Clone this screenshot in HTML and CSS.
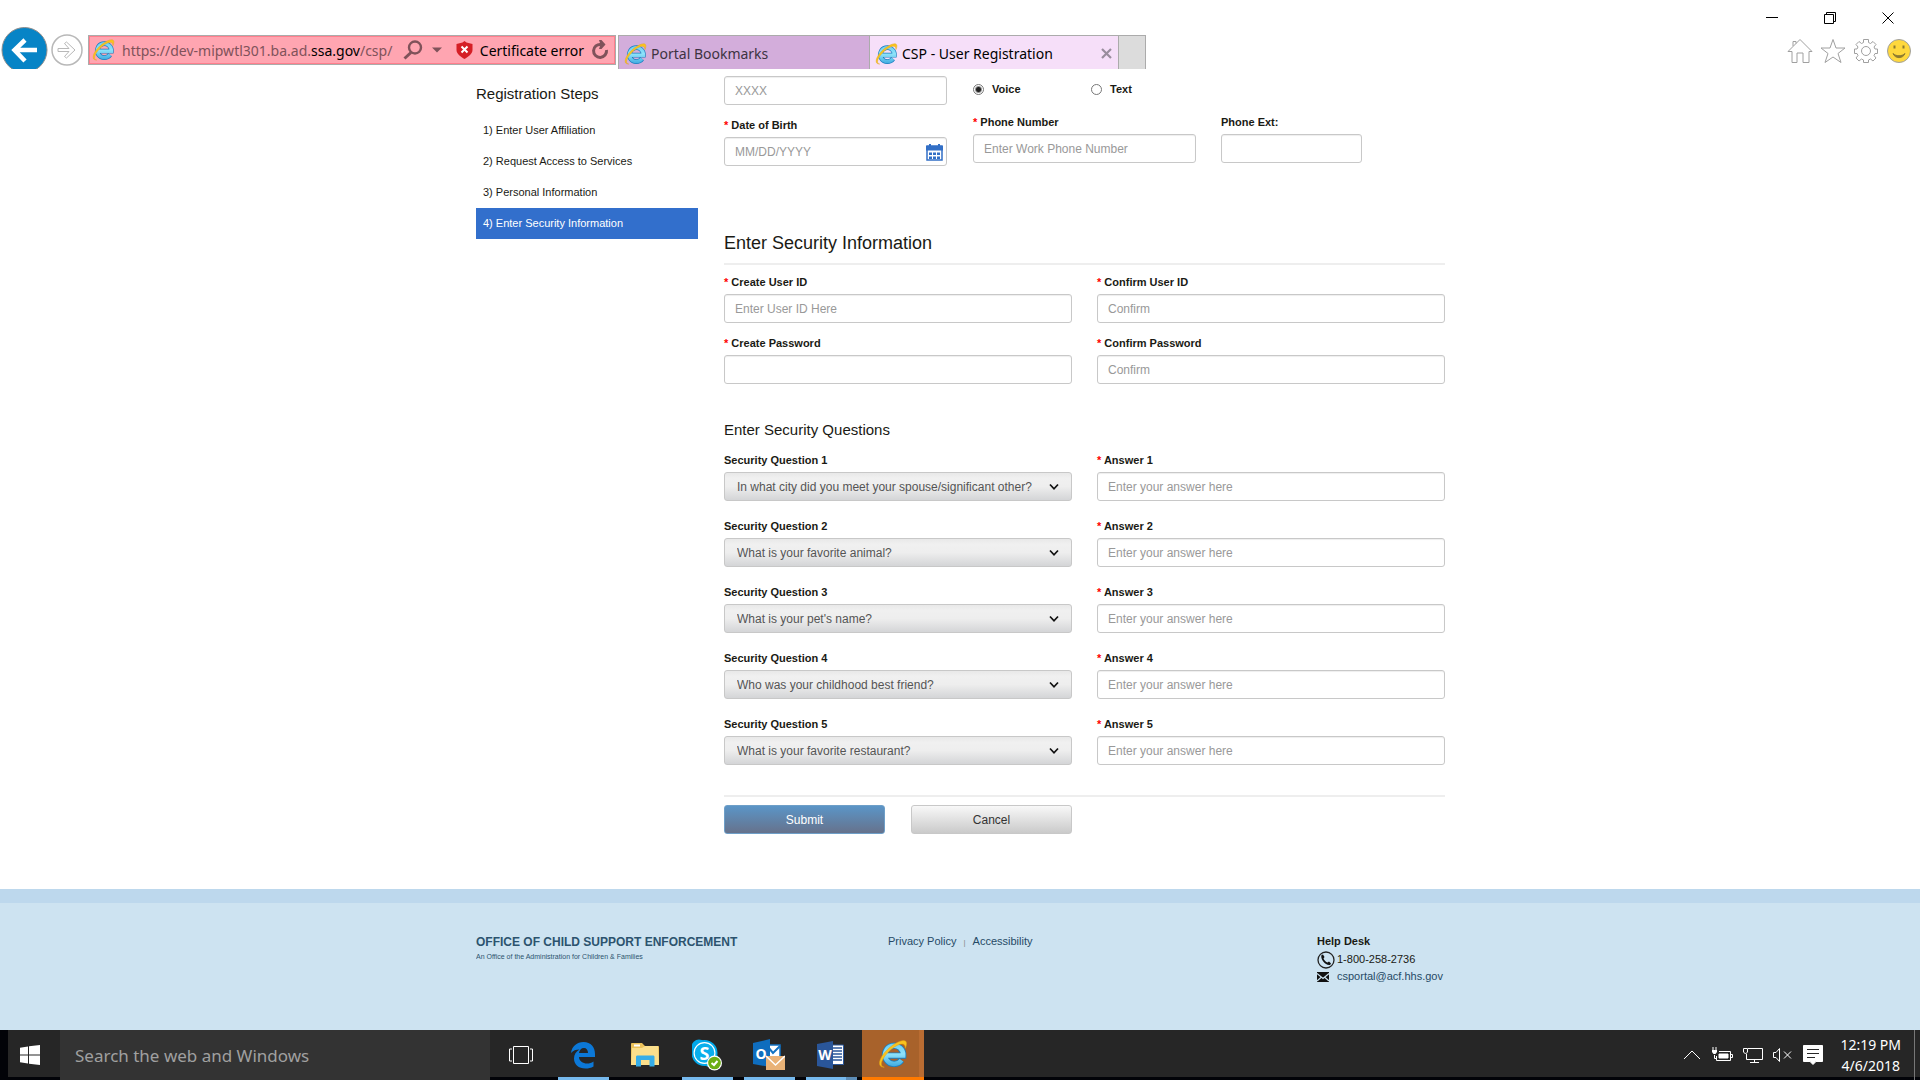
FILE: index.html
```html
<!DOCTYPE html>
<html lang="en">
<head>
    <meta charset="UTF-8">
    <meta name="viewport" content="width=device-width, initial-scale=1.0">
    <title>CSP - User Registration</title>
    <link rel="stylesheet" href="styles.css">
</head>
<body>
    <svg class="defs" aria-hidden="true">
        <defs>
            <linearGradient id="ie-blue" x1="0" y1="0" x2="0" y2="24" gradientUnits="userSpaceOnUse">
                <stop offset="0" stop-color="#5cc4f0"/>
                <stop offset="0.5" stop-color="#8fe3fa"/>
                <stop offset="1" stop-color="#2f9fdc"/>
            </linearGradient>
            <symbol id="ie" viewBox="0 0 24 24">
                <path d="M7 13.2H20.2A7.3 7.3 0 1 0 18.8 17" fill="none" stroke="#1c7fc0" stroke-width="5"/>
                <path d="M7 13.2H20.2A7.3 7.3 0 1 0 18.8 17" fill="none" stroke="url(#ie-blue)" stroke-width="3.6"/>
                <path d="M5 22.5C-1.5 23 1 14.5 7.5 8.5C14 2.5 22 -1 22.8 3C23 4.5 22.5 6 21.8 7.5C22 4 20 3 15.5 5C8 8.5 1 18.5 3 21.3C3.5 22 4 22.3 5 22.5Z" fill="#f9c31f" stroke="#e0a010" stroke-width=".4"/>
            </symbol>
            <symbol id="chevron" viewBox="0 0 10 8">
                <path d="M1 1.5L5 5.8L9 1.5" fill="none" stroke="#111" stroke-width="1.7"/>
            </symbol>
        </defs>
    </svg>

    <header class="browser">
        <div class="window-buttons">
            <button type="button" aria-label="Minimize"><svg width="12" height="12" viewBox="0 0 12 12"><path d="M0 5.5H12"/></svg></button>
            <button type="button" aria-label="Restore"><svg width="12" height="12" viewBox="0 0 12 12"><path d="M.5 2.5H9.5V11.5H.5ZM2.5 2.5V.5H11.5V9.5H9.5"/></svg></button>
            <button type="button" aria-label="Close"><svg width="12" height="12" viewBox="0 0 12 12"><path d="M.5 .5L11.5 11.5M11.5 .5L.5 11.5"/></svg></button>
        </div>
        <div class="toolbar">
            <button class="nav-back" type="button" aria-label="Back">
                <svg width="48" height="42" viewBox="0 0 48 42">
                    <circle cx="24.5" cy="23" r="22.5" fill="#0784c6" stroke="#8d8d8d"/>
                    <path d="M37 23H14M25 13L14.5 23L25 34" fill="none" stroke="#fff" stroke-width="4.5"/>
                </svg>
            </button>
            <button class="nav-forward" type="button" aria-label="Forward">
                <svg width="32" height="32" viewBox="0 0 32 32" fill="#fff" stroke="#b8b8b8">
                    <circle cx="16" cy="16" r="15" stroke-width="1.5"/>
                    <path d="M7 14.5H18L13.5 9.5L15.5 8L24 16L15.5 24L13.5 22.5L18 17.5H7Z"/>
                </svg>
            </button>
            <div class="address">
                <svg class="ie-icon" width="23" height="24"><use href="#ie"/></svg>
                <span class="url">https://dev-mipwtl301.ba.ad.<b>ssa.gov</b>/csp/</span>
                <svg class="search-icon" width="20" height="20" viewBox="0 0 20 20" fill="none" stroke="#80525a">
                    <circle cx="12" cy="7.5" r="6" stroke-width="2.4"/>
                    <path d="M8 12.5L1.5 18.5" stroke-width="3"/>
                </svg>
                <svg class="drop-icon" width="10" height="6" viewBox="0 0 10 6"><path d="M0 .5H10L5 5.5Z" fill="#80525a"/></svg>
                <svg class="shield-icon" width="17" height="18" viewBox="0 0 17 18">
                    <path d="M8.5 0L10.5 1.5L16.5 3V9C16.5 13 12 16 8.5 18C5 16 .5 13 .5 9V3L6.5 1.5Z" fill="#d51f26"/>
                    <path d="M5.5 5.5L11.5 11.5M11.5 5.5L5.5 11.5" stroke="#fff" stroke-width="2"/>
                </svg>
                <span class="cert">Certificate error</span>
                <button class="refresh" type="button" aria-label="Refresh">
                    <svg width="18" height="20" viewBox="0 0 18 20">
                        <path d="M10 4.5A6.5 6.5 0 1 0 15.5 10" fill="none" stroke="#80525a" stroke-width="3"/>
                        <path d="M8 0H10.5L14.5 4.5L10.5 9H8L9.5 4.5Z" fill="#80525a"/>
                    </svg>
                </button>
            </div>
            <nav class="tabs">
                <a class="tab" href="#"><svg width="23" height="24"><use href="#ie"/></svg>Portal Bookmarks</a>
                <a class="tab tab-active" href="#"><svg width="23" height="24"><use href="#ie"/></svg>CSP - User Registration
                    <svg class="tab-close" width="11" height="11" viewBox="0 0 11 11"><path d="M1 1L10 10M10 1L1 10" stroke="#998d9d" stroke-width="2.2"/></svg></a>
                <button class="tab-new" type="button" aria-label="New tab"></button>
            </nav>
            <div class="tools">
                <button type="button" aria-label="Home"><svg width="26" height="26" viewBox="0 0 26 26"><path d="M1 13.5L13 1.5L25 13.5H22V24.5H16V15H10V24.5H5V13.5ZM6 8V3.5H9V5.5"/></svg></button>
                <button type="button" aria-label="Favorites"><svg width="26" height="26" viewBox="0 0 26 26"><path d="M13 1.5L16 10H25L18 15.5L21 24.5L13 19L5 24.5L8 15.5L1 10H10Z"/></svg></button>
                <button type="button" aria-label="Tools"><svg width="26" height="26" viewBox="0 0 26 26"><path d="M10.5 1.5H15.5V4.5L17.5 5.5L20 3.5L23 6.5L21 9L22 11H24.5V15.5H22L21 17.5L23 20L20 23L17.5 21L15.5 22V24.5H10.5V22L8.5 21L6 23L3 20L5 17.5L4 15.5H1.5V11H4L5 9L3 6.5L6 3.5L8.5 5.5L10.5 4.5Z"/><circle cx="13" cy="13" r="4.5"/></svg></button>
                <button type="button" aria-label="Feedback"><svg class="smiley" width="26" height="26" viewBox="0 0 26 26"><circle cx="13" cy="13" r="11.5"/><path d="M8.5 7.5V10.5M17.5 7.5V10.5" stroke-width="2"/><path d="M7 15.5C9 21 17 21 19 15.5C16 18.5 10 18.5 7 15.5Z"/></svg></button>
            </div>
        </div>
    </header>

    <main class="page">
        <aside class="sidebar">
            <h2>Registration Steps</h2>
            <ol class="steps">
                <li>1) Enter User Affiliation</li>
                <li>2) Request Access to Services</li>
                <li>3) Personal Information</li>
                <li class="current">4) Enter Security Information</li>
            </ol>
        </aside>

        <form class="registration">
            <div class="personal">
                <div class="stack">
                    <input class="text" type="text" placeholder="XXXX" aria-label="Last four digits of SSN">
                    <div class="field">
                        <label for="dob"><i>*</i> Date of Birth</label>
                        <div class="with-icon">
                            <input class="text" id="dob" type="text" placeholder="MM/DD/YYYY">
                            <svg class="calendar" width="17" height="17" viewBox="0 0 17 17">
                                <path d="M1 2H16V16H1Z" fill="#fff" stroke="#326fc6" stroke-width="1.5"/>
                                <path d="M0 2H17V6.5H0ZM3 0H5V3H3ZM12 0H14V3H12Z" fill="#326fc6"/>
                                <path d="M3 8.5H6V11H3ZM7 8.5H10V11H7ZM11 8.5H14V11H11ZM3 12.5H6V15H3ZM7 12.5H10V15H7ZM11 12.5H14V15H11Z" fill="#326fc6"/>
                            </svg>
                        </div>
                    </div>
                </div>
                <div class="stack">
                    <div class="radios">
                        <label><input type="radio" name="contact" checked> Voice</label>
                        <label><input type="radio" name="contact"> Text</label>
                    </div>
                    <div class="phones">
                        <div class="field">
                            <label for="phone"><i>*</i> Phone Number</label>
                            <input class="text" id="phone" type="text" placeholder="Enter Work Phone Number">
                        </div>
                        <div class="field">
                            <label for="ext">Phone Ext:</label>
                            <input class="text" id="ext" type="text">
                        </div>
                    </div>
                </div>
            </div>

            <h1>Enter Security Information</h1>
            <div class="fields">
                <div class="field">
                    <label for="userid"><i>*</i> Create User ID</label>
                    <input class="text" id="userid" type="text" placeholder="Enter User ID Here">
                </div>
                <div class="field">
                    <label for="userid2"><i>*</i> Confirm User ID</label>
                    <input class="text" id="userid2" type="text" placeholder="Confirm">
                </div>
                <div class="field">
                    <label for="password"><i>*</i> Create Password</label>
                    <input class="text" id="password" type="password">
                </div>
                <div class="field">
                    <label for="password2"><i>*</i> Confirm Password</label>
                    <input class="text" id="password2" type="password" placeholder="Confirm">
                </div>
            </div>

            <h3>Enter Security Questions</h3>
            <div class="fields questions">
                <div class="field">
                    <label for="q1">Security Question 1</label>
                    <div class="with-icon">
                        <select id="q1"><option>In what city did you meet your spouse/significant other?</option></select>
                        <svg class="arrow" width="10" height="8"><use href="#chevron"/></svg>
                    </div>
                </div>
                <div class="field">
                    <label for="a1"><i>*</i> Answer 1</label>
                    <input class="text" id="a1" type="text" placeholder="Enter your answer here">
                </div>
                <div class="field">
                    <label for="q2">Security Question 2</label>
                    <div class="with-icon">
                        <select id="q2"><option>What is your favorite animal?</option></select>
                        <svg class="arrow" width="10" height="8"><use href="#chevron"/></svg>
                    </div>
                </div>
                <div class="field">
                    <label for="a2"><i>*</i> Answer 2</label>
                    <input class="text" id="a2" type="text" placeholder="Enter your answer here">
                </div>
                <div class="field">
                    <label for="q3">Security Question 3</label>
                    <div class="with-icon">
                        <select id="q3"><option>What is your pet's name?</option></select>
                        <svg class="arrow" width="10" height="8"><use href="#chevron"/></svg>
                    </div>
                </div>
                <div class="field">
                    <label for="a3"><i>*</i> Answer 3</label>
                    <input class="text" id="a3" type="text" placeholder="Enter your answer here">
                </div>
                <div class="field">
                    <label for="q4">Security Question 4</label>
                    <div class="with-icon">
                        <select id="q4"><option>Who was your childhood best friend?</option></select>
                        <svg class="arrow" width="10" height="8"><use href="#chevron"/></svg>
                    </div>
                </div>
                <div class="field">
                    <label for="a4"><i>*</i> Answer 4</label>
                    <input class="text" id="a4" type="text" placeholder="Enter your answer here">
                </div>
                <div class="field">
                    <label for="q5">Security Question 5</label>
                    <div class="with-icon">
                        <select id="q5"><option>What is your favorite restaurant?</option></select>
                        <svg class="arrow" width="10" height="8"><use href="#chevron"/></svg>
                    </div>
                </div>
                <div class="field">
                    <label for="a5"><i>*</i> Answer 5</label>
                    <input class="text" id="a5" type="text" placeholder="Enter your answer here">
                </div>
            </div>

            <div class="actions">
                <button class="submit" type="submit">Submit</button>
                <button class="cancel" type="button">Cancel</button>
            </div>
        </form>
    </main>

    <footer class="footer">
        <div class="footer-inner">
            <div class="brand">
                <strong>OFFICE OF CHILD SUPPORT ENFORCEMENT</strong>
                <small>An Office of the Administration for Children &amp; Families</small>
            </div>
            <div class="links">
                <a href="#">Privacy Policy</a><span>|</span><a href="#">Accessibility</a>
            </div>
            <div class="help">
                <strong>Help Desk</strong>
                <div class="help-row">
                    <svg width="18" height="18" viewBox="0 0 18 18">
                        <circle cx="9" cy="9" r="8" fill="none" stroke="#222" stroke-width="1.3"/>
                        <path d="M4.5 4L6 3.5L7.5 6L6.5 7.5C7 9 9 11 10.5 11.5L12 10.5L14 12.5L13 14C9 15 3 8.5 4.5 4Z" fill="#111"/>
                    </svg>
                    <span>1-800-258-2736</span>
                </div>
                <div class="help-row">
                    <svg width="18" height="10" viewBox="0 0 18 10">
                        <path d="M0 0H12V10H0Z" fill="#111"/>
                        <path d="M0 1.5L6 6.5L12 1.5M0 9L4 5.5M12 9L8 5.5" fill="none" stroke="#cde3f1" stroke-width="1.2"/>
                    </svg>
                    <a href="#">csportal@acf.hhs.gov</a>
                </div>
            </div>
        </div>
    </footer>

    <div class="taskbar">
        <button class="start" type="button" aria-label="Start">
            <svg width="20" height="20" viewBox="0 0 20 20" fill="#fff"><path d="M0 2.7L8 1.5V9.5H0ZM9 1.3L20 0V9.5H9ZM0 10.5H8V18.5L0 17.3ZM9 10.5H20V20L9 18.7Z"/></svg>
        </button>
        <input class="task-search" type="text" placeholder="Search the web and Windows" aria-label="Search the web and Windows">
        <button class="task" type="button" aria-label="Task View">
            <svg width="26" height="20" viewBox="0 0 26 20" fill="none" stroke="#fff"><path d="M5.5 1.5H20.5V18.5H5.5ZM4 4H1.5V16H4M22 4H24.5V16H22"/></svg>
        </button>
        <button class="task running" type="button" aria-label="Edge">
            <svg width="26" height="28" viewBox="0 0 26 28"><path d="M1 12C2 5 7 1 13.5 1C21 1 25 6 25 13V16H9C9 20 13 22.5 17 22.5C19.5 22.5 21.5 22 23.5 20.5V25.5C21 27 18.5 27.5 15.5 27.5C8.5 27.5 4 23.5 4 17.5C4 13.5 6 10.5 9.5 8.5C6 8.5 3 9.5 1 12ZM9 12H18C18 9 16.5 7 14 7C11 7 9.5 9 9 12Z" fill="#0c78d7"/></svg>
        </button>
        <button class="task" type="button" aria-label="File Explorer">
            <svg width="28" height="24" viewBox="0 0 28 24">
                <path d="M0 1C0 .5 .5 0 1 0H11L14 3H27C27.6 3 28 3.4 28 4V22H0Z" fill="#ecc25a"/>
                <path d="M1 5L11 5L14 3H27L28 22H0Z" fill="#fbdf8c"/>
                <path d="M3 1.5H9V3.5H3Z" fill="#fff"/>
                <path d="M5 23.5V14C5 13 5.5 12.5 6.5 12.5H22C23 12.5 23.5 13 23.5 14V23.5H18.5V17H10V23.5Z" fill="#36ade8"/>
            </svg>
        </button>
        <button class="task running" type="button" aria-label="Skype">
            <svg width="30" height="32" viewBox="1 0 30 32">
                <circle cx="8" cy="8" r="7.5" fill="#00a8ea"/><circle cx="19" cy="20" r="8" fill="#00a8ea"/><circle cx="13.5" cy="14" r="12" fill="#fff" stroke="#00a8ea" stroke-width="2"/>
                <circle cx="13.5" cy="14" r="9.8" fill="#09aeec"/>
                <text x="13.5" y="20.5" class="skype-letter" text-anchor="middle">S</text>
                <circle cx="23.5" cy="24" r="7.5" fill="#fff"/><circle cx="23.5" cy="24" r="6.3" fill="#6bae13"/>
                <path d="M20.5 24L23 26L26.5 22" fill="none" stroke="#fff" stroke-width="2"/>
            </svg>
        </button>
        <button class="task running" type="button" aria-label="Outlook">
            <svg width="32" height="32" viewBox="0 0 32 32">
                <path d="M14 6H27V20H14Z" fill="#fff" stroke="#1272c2" stroke-width="1.5"/>
                <path d="M15 8L20 14L27 7" fill="none" stroke="#1272c2" stroke-width="2"/>
                <path d="M0 4L17 0V28L0 25Z" fill="#0f6dbe"/>
                <text x="8" y="19.5" class="office-letter" text-anchor="middle">O</text>
                <path d="M13 17H32V31H13Z" fill="#e9b277"/><path d="M13 17L22.5 26L32 17" fill="none" stroke="#fff" stroke-width="1.5"/>
            </svg>
        </button>
        <button class="task running grouped" type="button" aria-label="Word">
            <svg width="28" height="28" viewBox="0 0 28 28">
                <path d="M14 4H26.5V23.5H14Z" fill="#fff" stroke="#2a5699"/>
                <path d="M16 7H25M16 10H25M16 13H25M16 16H25M16 19H25" stroke="#2a5699" stroke-width="1.5"/>
                <path d="M0 3L16 0V28L0 25Z" fill="#2a5699"/>
                <text x="8" y="19" class="office-letter" text-anchor="middle">W</text>
            </svg>
        </button>
        <button class="task ie-task" type="button" aria-label="Internet Explorer">
            <svg width="30" height="30"><use href="#ie"/></svg>
        </button>
        <div class="tray">
            <svg width="18" height="12" viewBox="0 0 18 12"><path d="M1 10L9 2L17 10"/></svg>
            <svg width="22" height="16" viewBox="0 0 22 16"><path d="M8 4.5H19.5V13.5H5.5V9M20 7.5H21.5V10.5H20M2 0V3M5 0V3M3.5 8V11.5H5"/><path d="M8 7H17V11H8Z" fill="#fff"/><path d="M1 3H6V5L4.5 7H2.5L1 5Z" fill="#fff" stroke="none"/></svg>
            <svg width="20" height="18" viewBox="0 0 20 18"><path d="M5 2.5H19.5V13.5H3.5V8M11.5 13.5V16.5M7 16.5H16"/><path d="M.5 2.5H4.5V6L2.5 8L.5 6Z"/></svg>
            <svg width="20" height="16" viewBox="0 0 20 16"><path d="M.5 5.5H3L6.5 1.5V14.5L3 10.5H.5ZM11 4.5L18 11.5M18 4.5L11 11.5"/></svg>
            <svg width="20" height="20" viewBox="0 0 20 20"><path d="M.5 .5H19.5V16.5H13L10 19.5L7 16.5H.5Z" fill="#fff"/><path d="M4 4.5H16M4 8.5H16M4 12.5H12" stroke="#262626"/></svg>
            <div class="clock"><span>12:19 PM</span><span>4/6/2018</span></div>
            <span class="show-desktop"></span>
        </div>
    </div>
</body>
</html>
```
FILE: styles.css
```css
* {
    box-sizing: border-box;
}
body {
    display: flex;
    flex-direction: column;
    min-height: 100vh;
    margin: 0;
    background-color: #fff;
    color: #1a1a14;
    font-family: "Liberation Sans", Arial, sans-serif;
    font-size: 12px;
}
svg {
    display: block;
    flex: none;
}
button {
    padding: 0;
    border: none;
    background: none;
    font-family: inherit;
}
.defs {
    position: absolute;
    width: 0;
    height: 0;
}

/* browser window */
.browser {
    font-family: "Noto Sans", "Open Sans", sans-serif;
    font-size: 14px;
}
.window-buttons {
    display: flex;
    justify-content: flex-end;
    height: 27px;
    padding: 9px 3px 0 0;
}
.window-buttons button {
    display: flex;
    justify-content: center;
    align-items: center;
    width: 58px;
}
.window-buttons svg {
    fill: none;
    stroke: #000;
}
.toolbar {
    display: flex;
    height: 42px;
}
.nav-back {
    width: 48px;
}
.nav-forward {
    display: flex;
    align-items: center;
    height: 46px;
    margin: 0 5px 0 3px;
}
.address {
    display: flex;
    align-items: center;
    width: 528px;
    height: 30px;
    margin: 8px 2px 0 0;
    padding: 0 6px 0 3px;
    border: 1px solid #ababab;
    outline: 1px solid #ff7f8d;
    outline-offset: -2px;
    background-color: #ffa5b1;
    white-space: nowrap;
}
.url {
    flex: 1;
    margin-left: 7px;
    color: #80525a;
}
.url b {
    color: #000;
    font-weight: normal;
}
.drop-icon {
    margin: 0 14px 0 9px;
}
.cert {
    margin: 0 7px;
    color: #000;
}
.tabs {
    display: flex;
    height: 34px;
    margin-top: 8px;
    border: solid #ababab;
    border-width: 1px 1px 0;
}
.tab {
    display: flex;
    align-items: center;
    gap: 4px;
    width: 250px;
    padding: 2px 6px 0 5px;
    background-color: #d3addb;
    color: #3d3342;
    text-decoration: none;
}
.tab-active {
    border: solid #ababab;
    border-width: 0 1px;
    background-color: #f6dff9;
    color: #000;
}
.tab-close {
    margin-left: auto;
}
.tab-new {
    width: 26px;
    background-color: #dcdcdc;
}
.tools {
    display: flex;
    gap: 7px;
    margin: 11px 8px 0 auto;
}
.tools button {
    height: 26px;
}
.tools svg {
    fill: #fff;
    stroke: #a0a0a0;
}
.smiley circle {
    fill: #ffd83d;
}
.smiley path {
    fill: #8d7a30;
    stroke: #8d7a30;
}

/* page content */
.page {
    display: grid;
    grid-template-columns: 222px 1fr;
    gap: 26px;
    flex: 1;
    width: 100%;
    max-width: 970px;
    margin: 0 auto;
    padding: 7px 0 55px 1px;
}
h1, h2, h3 {
    margin: 0;
    font-weight: normal;
}
.sidebar h2 {
    margin: 8px 0 11px;
    font-size: 15px;
    line-height: 20px;
}
.steps {
    margin: 0;
    padding: 0;
    list-style: none;
    font-size: 11px;
}
.steps li {
    padding: 0 7px;
    line-height: 31px;
}
.steps .current {
    background-color: #326fcc;
    color: #fff;
}
.personal {
    display: grid;
    grid-template-columns: 223px 1fr;
    gap: 26px;
}
.stack {
    display: flex;
    flex-direction: column;
    gap: 10px;
}
.radios {
    display: flex;
    height: 26px;
}
.radios label {
    display: flex;
    align-items: center;
    gap: 8px;
    width: 118px;
    font-size: 11px;
    font-weight: bold;
}
.radios input {
    appearance: none;
    width: 11px;
    height: 11px;
    margin: 0;
    border: 1px solid #777;
    border-radius: 50%;
}
.radios input:checked {
    background: radial-gradient(#222 2px, #fff 4px);
}
.phones {
    display: grid;
    grid-template-columns: 223px 141px;
    gap: 25px;
}
.field label {
    display: block;
    margin-bottom: 2px;
    font-size: 11px;
    font-weight: bold;
    line-height: 20px;
}
.field i {
    color: #f00;
    font-style: normal;
}
.text, select {
    display: block;
    width: 100%;
    height: 29px;
    padding: 0 10px;
    border: 1px solid #c8c8c8;
    border-radius: 3px;
    background-color: #fff;
    box-shadow: inset 0 1px 1px #eee;
    font-family: inherit;
    font-size: 12px;
}
.text::placeholder {
    color: #999;
    opacity: 1;
}
select {
    appearance: none;
    padding: 0 30px 0 12px;
    background: linear-gradient(#e8e8e8, #f0f0f0 20%, #eee 50%, #d4d5d7);
    box-shadow: none;
    color: #555;
}
.with-icon {
    position: relative;
}
.calendar {
    position: absolute;
    top: 7px;
    right: 4px;
}
.arrow {
    position: absolute;
    top: 11px;
    right: 13px;
    pointer-events: none;
}
h1 {
    margin: 65px 0 7px;
    padding-bottom: 8px;
    border-bottom: 2px solid #eee;
    font-size: 18px;
    line-height: 24px;
}
h3 {
    margin: 36px 0 10px;
    font-size: 15px;
    line-height: 20px;
}
.fields {
    display: grid;
    grid-template-columns: 1fr 1fr;
    gap: 10px 25px;
}
.questions {
    row-gap: 15px;
}
.actions {
    display: flex;
    gap: 26px;
    margin-top: 30px;
    padding-top: 8px;
    border-top: 2px solid #eee;
}
.actions button {
    width: 161px;
    height: 29px;
    border: 1px solid #c8c8c8;
    border-radius: 3px;
    background: linear-gradient(#f8f8f8, #cacaca);
    color: #333;
    font-size: 12px;
}
.actions .submit {
    border-color: #6e9fc8;
    background: linear-gradient(#5b95c7, #66728c);
    color: #fff;
}

/* footer */
.footer {
    height: 141px;
    padding-top: 28px;
    border-top: 14px solid #bdd8ed;
    background-color: #cde3f1;
    font-size: 11px;
}
.footer a {
    color: #264a66;
    text-decoration: none;
}
.footer-inner {
    display: grid;
    grid-template-columns: 412px 1fr 128px;
    max-width: 970px;
    margin: 0 auto;
    padding-left: 1px;
    line-height: 20px;
}
.brand {
    color: #2c536e;
}
.brand strong, .brand small {
    display: block;
    white-space: nowrap;
}
.brand strong {
    font-size: 12px;
    line-height: 22px;
}
.brand small {
    height: 8px;
    overflow: hidden;
    font-size: 7px;
    line-height: 8px;
}
.links span {
    margin: 0 7px;
    color: #888;
    font-size: 8px;
}
.help strong {
    display: block;
}
.help-row {
    display: flex;
    align-items: center;
    gap: 2px;
    height: 17px;
    line-height: 17px;
}

/* windows taskbar */
.taskbar {
    display: flex;
    height: 50px;
    border-left: 8px solid #020308;
    background: linear-gradient(#262626 47px, #020308 47px);
    color: #fff;
    font-family: "Noto Sans", "Open Sans", sans-serif;
}
.start {
    display: flex;
    justify-content: center;
    align-items: center;
    width: 52px;
    padding-right: 8px;
}
.task-search {
    width: 430px;
    padding: 0 15px;
    border: none;
    background-color: #333;
    font-family: inherit;
    font-size: 17px;
}
.task-search::placeholder {
    color: #a0a0a0;
    opacity: 1;
}
.task {
    display: flex;
    justify-content: center;
    align-items: center;
    width: 62px;
}
.running {
    background: linear-gradient(#76b9ed, #76b9ed) no-repeat center bottom / 51px 3px;
}
.grouped {
    background: linear-gradient(90deg, #76b9ed 40px, #5c8cb6 40px) no-repeat center bottom / 51px 3px;
}
.ie-task {
    border-bottom: 3px solid #ff7a00;
    background: linear-gradient(90deg, #a8622b 57px, #b96c32 57px);
}
.skype-letter {
    fill: #fff;
    font-size: 18px;
    font-weight: bold;
}
.office-letter {
    fill: #fff;
    font-size: 14px;
    font-weight: bold;
}
.tray {
    display: flex;
    align-items: center;
    gap: 10px;
    margin-left: auto;
}
.tray svg {
    fill: none;
    stroke: #fff;
}
.clock {
    display: flex;
    flex-direction: column;
    align-items: center;
    margin: 0 3px 0 7px;
    font-size: 14px;
    line-height: 21px;
}
.show-desktop {
    align-self: stretch;
    width: 6px;
    border-left: 1px solid #777;
}
```
